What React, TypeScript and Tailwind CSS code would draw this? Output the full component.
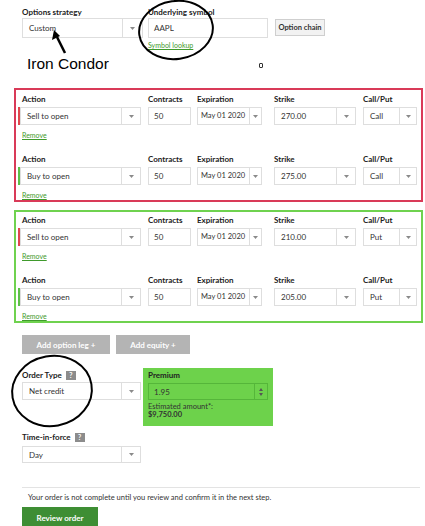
import React from "react";

const Caret = () => (
  <svg width="5" height="3" viewBox="0 0 5 3">
    <path d="M0 0 L5 0 L2.5 3 Z" fill="#8a8a8a" />
  </svg>
);

function Select({
  value,
  w,
  h = 18,
  seg = 19,
  bar,
  pl = 6,
  small,
}: {
  value: string;
  w: number;
  h?: number;
  seg?: number;
  bar?: string;
  pl?: number;
  small?: boolean;
}) {
  return (
    <div className="flex" style={{ width: w, height: h }}>
      {bar && <div className="w-[2px] h-full" style={{ background: bar }} />}
      <div className="flex flex-1 border border-[#dedede] bg-white">
        <div
          className={
            "flex-1 flex items-center whitespace-nowrap overflow-hidden text-[#333] " +
            (small ? "text-[7.5px]" : "text-[8px]")
          }
          style={{ paddingLeft: pl }}
        >
          {value}
        </div>
        <div
          className="flex items-center justify-center border-l border-[#dedede]"
          style={{ width: seg }}
        >
          <Caret />
        </div>
      </div>
    </div>
  );
}

function Input({ value, w, h = 18 }: { value: string; w: number; h?: number }) {
  return (
    <div
      className="flex items-center border border-[#dedede] bg-white pl-[5px] text-[8px] text-[#333]"
      style={{ width: w, height: h }}
    >
      {value}
    </div>
  );
}

const Label = ({ children, className = "" }: { children: React.ReactNode; className?: string }) => (
  <div className={"h-[10px] leading-[10px] whitespace-nowrap text-[8px] font-bold text-[#222] " + className}>{children}</div>
);

function Leg({
  action,
  bar,
  exp,
  strike,
  cp,
  first,
}: {
  action: string;
  bar: string;
  exp: string;
  strike: string;
  cp: string;
  first?: boolean;
}) {
  return (
    <div className={first ? "" : "mt-[14px]"}>
      <div className="flex items-start">
        <div className="w-[123px]">
          <Label className="pl-[4px]">Action</Label>
          <div className="mt-[3px]">
            <Select value={action} w={123} bar={bar} />
          </div>
          <div className="mt-[5px] h-[10px] leading-[10px] pl-[4px] text-[7px] text-[#3f9a2c] underline">
            Remove
          </div>
        </div>
        <div className="ml-[7px] w-[43px]">
          <Label>Contracts</Label>
          <div className="mt-[3px]">
            <Input value="50" w={43} />
          </div>
        </div>
        <div className="ml-[6px] w-[65px]">
          <Label>Expiration</Label>
          <div className="mt-[3px]">
            <Select value={exp} w={65} seg={12} pl={3} small />
          </div>
        </div>
        <div className="ml-[12px] w-[82px]">
          <Label>Strike</Label>
          <div className="mt-[3px]">
            <Select value={strike} w={82} />
          </div>
        </div>
        <div className="ml-[7px] w-[54px]">
          <Label>Call/Put</Label>
          <div className="mt-[3px]">
            <Select value={cp} w={54} seg={17} />
          </div>
        </div>
      </div>
    </div>
  );
}

const Help = () => (
  <span className="ml-[4px] inline-flex h-[9px] w-[10px] items-center justify-center bg-[#8c8c8c] text-[7px] font-bold text-white leading-none">
    ?
  </span>
);

export default function App() {
  return (
    <div
      className="relative w-[425px] h-[526px] overflow-hidden bg-white text-[#222]"
      style={{ fontFamily: "Lato, 'Open Sans', sans-serif" }}
    >
      {/* top */}
      <div className="pt-[7px] pl-[22px] flex items-start">
        <div className="w-[121px]">
          <Label>Options strategy</Label>
          <div className="mt-[1px]">
            <Select value="Custom" w={121} h={20} seg={20} />
          </div>
        </div>
        <div className="ml-[5px] w-[120px]">
          <Label>Underlying symbol</Label>
          <div className="mt-[1px]">
            <Input value="AAPL" w={120} h={20} />
          </div>
          <div className="mt-[3px] h-[8px] leading-[8px] text-[7px] text-[#3f9a2c] underline">Symbol lookup</div>
        </div>
        <div className="ml-[7px] mt-[12px] flex h-[17px] w-[50px] items-center justify-center border border-[#cfcfcf] bg-[#f2f2f2] text-[7.5px] font-bold text-[#333]">
          Option chain
        </div>
      </div>

      <div className="mt-[6px] flex h-[18px] items-center">
        <div
          className="pl-[27px] text-[15.5px] leading-[18px] text-black"
          style={{ fontFamily: "'Liberation Sans', Arial, sans-serif" }}
        >
          Iron Condor
        </div>
        <div className="ml-[150px] mt-[2px] h-[5px] w-[4px] rounded-[1px] border-[1.5px] border-[#333]" />
      </div>

      {/* red box */}
      <div className="mt-[15px] ml-[14px] w-[409px] border-2 border-[#d93a58] pt-[4px] pl-[2px]">
        <Leg first action="Sell to open" bar="#e0474c" exp="May 01 2020" strike="270.00" cp="Call" />
        <Leg action="Buy to open" bar="#5dbf48" exp="May 01 2020" strike="275.00" cp="Call" />
      </div>

      {/* green box */}
      <div className="mt-[8px] ml-[14px] w-[409px] border-2 border-[#6fd24f] pt-[3px] pl-[2px]">
        <Leg first action="Sell to open" bar="#e0474c" exp="May 01 2020" strike="210.00" cp="Put" />
        <Leg action="Buy to open" bar="#5dbf48" exp="May 01 2020" strike="205.00" cp="Put" />
      </div>

      {/* buttons */}
      <div className="mt-[12px] ml-[22px] flex gap-[6px]">
        <div className="flex h-[19px] w-[88px] items-center justify-center bg-[#b4b4b4] text-[8px] font-bold text-white">
          Add option leg +
        </div>
        <div className="flex h-[19px] w-[74px] items-center justify-center bg-[#b4b4b4] text-[8px] font-bold text-white">
          Add equity +
        </div>
      </div>

      {/* order type + premium */}
      <div className="mt-[14px] ml-[22px] flex items-start">
        <div className="w-[121px] pt-[2px]">
          <Label className="flex items-center">
            Order Type <Help />
          </Label>
          <div className="mt-[2px]">
            <Select value="Net credit" w={119} />
          </div>
        </div>
        <div className="h-[58px] w-[130px] bg-[#6dd24b] pl-[5px] pt-[2px]">
          <Label>Premium</Label>
          <div className="mt-[3px] flex h-[17px] w-[120px] border border-[#55b63a]">
            <div className="flex flex-1 items-center pl-[5px] text-[8px] text-[#333]">1.95</div>
            <div className="flex w-[13px] flex-col items-center justify-center gap-[2px] border-l border-[#55b63a]">
              <svg width="4" height="3" viewBox="0 0 4 3">
                <path d="M0 3 L4 3 L2 0 Z" fill="#555" />
              </svg>
              <svg width="4" height="3" viewBox="0 0 4 3">
                <path d="M0 0 L4 0 L2 3 Z" fill="#555" />
              </svg>
            </div>
          </div>
          <div className="mt-[3px] h-[8px] leading-[8px] text-[7.5px] text-[#333]">Estimated amount*:</div>
          <div className="h-[8px] leading-[8px] text-[7.5px] font-bold text-[#333]">$9,750.00</div>
        </div>
      </div>

      {/* time in force */}
      <div className="mt-[6px] ml-[22px]">
        <Label className="flex items-center">
          Time-in-force <Help />
        </Label>
        <div className="mt-[4px]">
          <Select value="Day" w={119} h={17} />
        </div>
      </div>

      <div className="mt-[24px] ml-[22px] h-px w-[398px] bg-[#e3e3e3]" />
      <div className="mt-[5px] ml-[28px] h-[10px] leading-[10px] text-[7.5px] text-[#333]">
        Your order is not complete until you review and confirm it in the next step.
      </div>
      <div className="mt-[4px] ml-[22px] flex h-[22px] w-[76px] items-center justify-center bg-[#3e8e34] text-[8px] font-bold text-white">
        Review order
      </div>

      {/* annotations */}
      <svg className="pointer-events-none absolute left-0 top-0" width="425" height="526" viewBox="0 0 425 526">
        <ellipse cx="176" cy="30" rx="37" ry="29" transform="rotate(-8 176 30)" fill="none" stroke="#000" strokeWidth="2" />
        <ellipse cx="52" cy="391" rx="40" ry="35" transform="rotate(-10 52 391)" fill="none" stroke="#000" strokeWidth="2" />
        <line x1="65" y1="53" x2="57" y2="37" stroke="#000" strokeWidth="2.5" />
        <path d="M54 30 L52 40 L60 36 Z" fill="#000" />
      </svg>
    </div>
  );
}
